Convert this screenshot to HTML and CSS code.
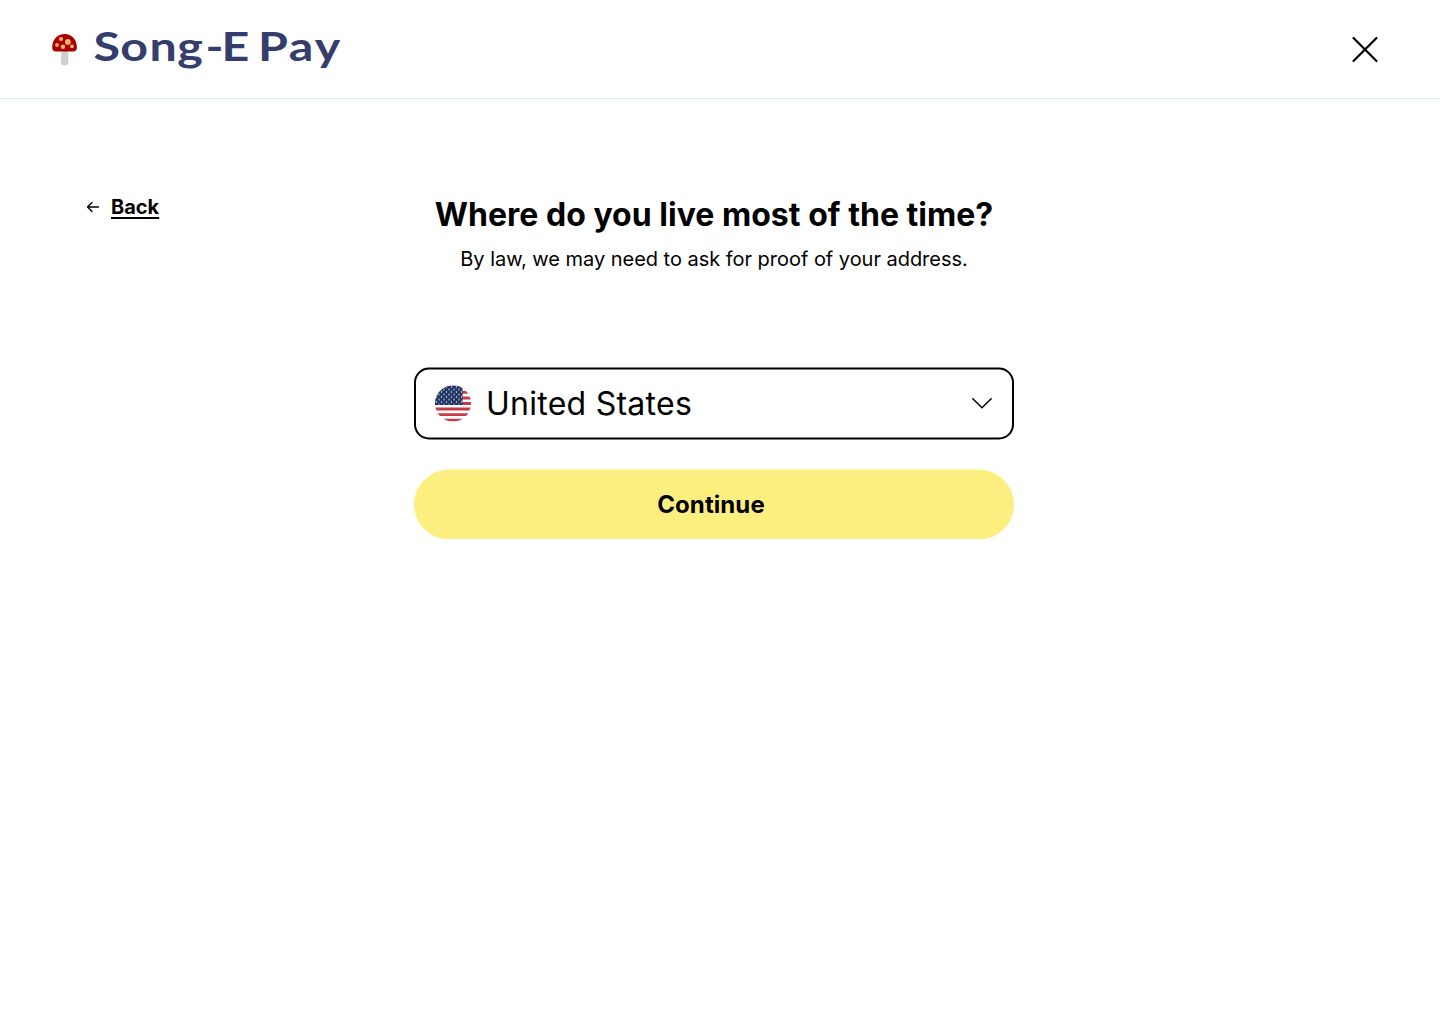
FILE: index.html
```html
<!DOCTYPE html>
<html lang="en">
<head>
<meta charset="utf-8">
<title>Song-E Pay</title>
<link rel="stylesheet" href="styles.css">
</head>
<body>
<header class="header">
  <a class="brand">
    <svg class="mushroom" viewBox="0 0 26 34">
      <path d="M9.400 17h6.600l.5 12.200c0 2-1.600 3.300-3.900 3.300s-3.900-1.300-3.800-3.300z" fill="#d0d0d0"/>
      <path d="M.2 14.500C.2 6.600 5.400 1 12.600 1s12.300 5.600 12.300 13.500c0 2.800-1.300 4-3.800 4H4c-2.500 0-3.800-1.200-3.800-4z" fill="#a60000"/>
      <g fill="#ffb269"><circle cx="9" cy="6" r="2.100"/><circle cx="15.900" cy="8.900" r="2.900"/><circle cx="5" cy="12" r="1.900"/><circle cx="11" cy="13.800" r="2.200"/><circle cx="20" cy="13.300" r="1.900"/></g>
    </svg>
    <svg class="wordmark" viewBox="0 0 250 60"><text transform="scale(1.180 1)" x="-.5 22.300 47 70.500 94.400 108 132.700 139 165 187" y="41.500">Song-E Pay</text></svg>
  </a>
  <svg class="close" viewBox="0 0 28 28"><path d="M2.500 2l23 23M25.500 2l-23 23"/></svg>
</header>
<main class="page">
  <a class="back">
    <svg class="arrow" viewBox="0 0 14 14"><path d="M12.500 7H1.800M6 2.500L1.500 7 6 11.500"/></svg>
    <span class="back-label">Back</span>
  </a>
  <section class="form">
    <h1 class="title">Where do you live most of the time?</h1>
    <p class="hint">By law, we may need to ask for proof of your address.</p>
    <div class="select">
      <svg class="flag" viewBox="0 0 36 36">
        <defs>
          <clipPath id="round"><circle cx="18" cy="18" r="18"/></clipPath>
          <pattern id="stars" width="5" height="5" patternUnits="userSpaceOnUse"><circle cx="1.500" cy="1.500" r=".75" fill="#fff"/><circle cx="4" cy="4" r=".75" fill="#fff"/></pattern>
        </defs>
        <g clip-path="url(#round)">
          <path fill="#fff" d="M0 0h36v36H0z"/>
          <path stroke="#c83c46" stroke-width="2.770" d="M0 1.400h36M0 6.900h36M0 12.500h36M0 18h36M0 23.500h36M0 29.100h36M0 34.600h36"/>
          <path fill="#1f3264" d="M0 0h27.500v19.400H0z"/>
          <path fill="url(#stars)" d="M0 0h27v19H0z"/>
        </g>
      </svg>
      <span class="country">United States</span>
      <svg class="chevron" viewBox="0 0 22 14"><path d="M1.800 2.300L11 11.300l9.200-9"/></svg>
    </div>
    <button class="continue"><span class="continue-label">Continue</span></button>
  </section>
</main>
</body>
</html>
```
FILE: styles.css
```css
* { box-sizing: border-box; }
body { margin: 0; background: #fff; color: #000; font-family: Inter, sans-serif; }
.header { height: 99px; display: flex; align-items: center; justify-content: space-between; padding: 1px 61px 0 52px; border-bottom: 1px solid #e1ecf2; }
.brand { display: flex; align-items: center; gap: 16px; }
.mushroom { width: 26px; height: 34px; }
.wordmark { width: 250px; height: 60px; overflow: visible; fill: #343d6b; font-family: Lato, sans-serif; font-size: 41px; font-weight: 700; }
.close { width: 28px; height: 28px; fill: none; stroke: #000; stroke-width: 2.2; stroke-linecap: round; }
.page { display: grid; grid-template-columns: 328px 600px; padding: 96px 0 0 86px; }
.back { display: flex; align-items: center; align-self: start; height: 24px; gap: 11px; }
.arrow { width: 14px; height: 14px; fill: none; stroke: #000; stroke-width: 1.4; stroke-linecap: round; stroke-linejoin: round; }
.back-label { font-size: 20px; font-weight: 700; line-height: 24px; text-decoration: underline; text-decoration-thickness: 1.5px; text-underline-offset: 3px; text-decoration-skip-ink: none; }
.form { display: flex; flex-direction: column; align-items: stretch; }
.title { margin: 0; font-size: 32px; line-height: 39px; font-weight: 700; letter-spacing: .02px; text-align: center; white-space: nowrap; }
.hint { margin: 13px 0 0; font-size: 20px; line-height: 24px; text-align: center; white-space: nowrap; letter-spacing: -.03px; }
.select { display: flex; align-items: center; height: 72px; margin-top: 96px; padding: 0 19px; border: 2px solid #000; border-radius: 15px; transform: translateY(.5px); }
.flag { width: 36px; height: 36px; }
.country { margin: 0 0 2px 15px; font-size: 32px; line-height: 39px; letter-spacing: .26px; }
.chevron { width: 22px; height: 14px; margin-left: auto; fill: none; stroke: #000; stroke-width: 1.5; stroke-linecap: round; stroke-linejoin: round; }
.continue { height: 70px; margin-top: 30px; padding: 0 6px 1px 0; border: 0; border-radius: 35px; background: #fdef7f; color: #000; font: 700 24px/29px Inter, sans-serif; letter-spacing: .08px; transform: translateY(.5px); }
```
